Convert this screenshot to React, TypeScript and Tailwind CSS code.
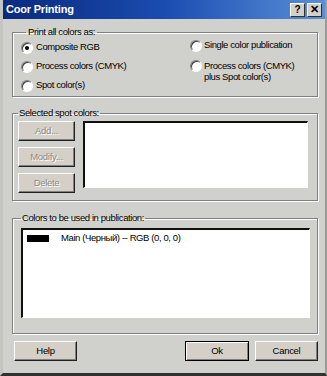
import React from "react";

const font = { fontFamily: '"Liberation Sans", Arial, sans-serif' };

function Radio({ checked }: { checked?: boolean }) {
  return (
    <span className="relative inline-block w-[12px] h-[12px] shrink-0 rounded-full bg-white border border-t-[#808080] border-l-[#808080] border-b-white border-r-white shadow-[inset_1px_1px_0_#404040]">
      {checked && (
        <span className="absolute left-[3px] top-[3px] w-[4px] h-[4px] rounded-full bg-black" />
      )}
    </span>
  );
}

function Btn({
  children,
  w,
  disabled,
  def,
}: {
  children: React.ReactNode;
  w: string;
  disabled?: boolean;
  def?: boolean;
}) {
  return (
    <div
      className={
        "h-[20px] flex items-center justify-center text-[9.5px] tracking-[-0.3px] bg-[#d4d0c8] border " +
        w +
        (def
          ? " border-black shadow-[inset_1px_1px_0_#fff,inset_-1px_-1px_0_#808080]"
          : " border-t-white border-l-white border-b-[#202020] border-r-[#202020] shadow-[inset_-1px_-1px_0_#808080]") +
        (disabled ? " text-[#8a8a8a] [text-shadow:1px_1px_0_#fff]" : " text-black")
      }
    >
      {children}
    </div>
  );
}

export default function App() {
  return (
    <div
      style={font}
      className="w-[327px] h-[376px] bg-[#d0d0cc] flex flex-col border-l-[3px] border-l-[#c4c4c0] border-r-[2px] border-r-[#9a9a96] border-b-[3px] border-b-[#303030] overflow-hidden"
    >
      {/* Title bar */}
      <div className="h-[19px] shrink-0 flex items-center justify-between pl-[3px] pr-[3px] bg-gradient-to-r from-[#0a2a7e] via-[#1a4cb0] to-[#5a8fd8]">
        <span className="text-white font-bold text-[11px] tracking-[-0.2px]">Coor Printing</span>
        <div className="flex gap-[2px]">
          <div className="w-[15px] h-[14px] bg-[#d4d0c8] border border-t-white border-l-white border-b-[#303030] border-r-[#303030] flex items-center justify-center text-[10px] font-bold leading-none text-black">
            ?
          </div>
          <div className="w-[15px] h-[14px] bg-[#d4d0c8] border border-t-white border-l-white border-b-[#303030] border-r-[#303030] flex items-center justify-center text-[11px] font-bold leading-none text-black">
            ✕
          </div>
        </div>
      </div>

      <div className="flex flex-col pl-[9px] pr-[7px] text-[9.5px] tracking-[-0.4px] text-black">
        {/* Group 1 */}
        <fieldset className="mt-[7px] border border-[#808080] shadow-[inset_1px_1px_0_#fff,1px_1px_0_#fff] px-[8px] pb-[1px]">
          <legend className="ml-[5px] px-[2px] leading-[12px]">Print all colors as:</legend>
          <div className="grid grid-cols-[169px_1fr]">
            <div className="flex flex-col">
              <div className="h-[19px] flex items-center gap-[3px]">
                <Radio checked />
                <span>Composite RGB</span>
              </div>
              <div className="h-[19px] flex items-center gap-[3px]">
                <Radio />
                <span>Process colors (CMYK)</span>
              </div>
              <div className="h-[19px] flex items-center gap-[3px]">
                <Radio />
                <span>Spot color(s)</span>
              </div>
            </div>
            <div className="flex flex-col">
              <div className="h-[15px] flex items-center gap-[2px]">
                <Radio />
                <span className="whitespace-nowrap">Single color publication</span>
              </div>
              <div className="mt-[7px] flex items-start gap-[2px]">
                <Radio />
                <span className="leading-[11px]">
                  Process colors (CMYK)
                  <br />
                  plus Spot color(s)
                </span>
              </div>
            </div>
          </div>
        </fieldset>

        {/* Group 2 */}
        <fieldset className="mt-[10px] border border-[#808080] shadow-[inset_1px_1px_0_#fff,1px_1px_0_#fff] pl-[5px] pr-[9px] pt-[2px] pb-[7px]">
          <legend className="ml-[0px] px-[1px] leading-[12px]">Selected spot colors:</legend>
          <div className="flex gap-[8px]">
            <div className="flex flex-col gap-[6px]">
              <Btn w="w-[57px]" disabled>Add...</Btn>
              <Btn w="w-[57px]" disabled>Modify...</Btn>
              <Btn w="w-[57px]" disabled>Delete</Btn>
            </div>
            <div className="flex-1 h-[67px] bg-white border-t-2 border-l-2 border-t-[#101010] border-l-[#101010] border-b border-r border-b-white border-r-white" />
          </div>
        </fieldset>

        {/* Group 3 */}
        <fieldset className="mt-[11px] border border-[#808080] shadow-[inset_1px_1px_0_#fff,1px_1px_0_#fff] pl-[8px] pr-[7px] pt-[4px] pb-[15px]">
          <legend className="ml-[0px] px-[1px] leading-[12px]">Colors to be used in publication:</legend>
          <div className="h-[90px] bg-white border-t-2 border-l-2 border-t-[#101010] border-l-[#101010] border-b border-r border-b-white border-r-white">
            <div className="flex items-center pt-[2px] pl-[4px] gap-[12px]">
              <span className="w-[22px] h-[7px] bg-black" />
              <span className="leading-[12px]">Main (Черный) -- RGB (0, 0, 0)</span>
            </div>
          </div>
        </fieldset>

        {/* Bottom buttons */}
        <div className="mt-[7px] flex items-center pl-[2px] pr-[0px]">
          <Btn w="w-[63px]">Help</Btn>
          <div className="flex-1" />
          <Btn w="w-[64px]" def>Ok</Btn>
          <div className="w-[6px]" />
          <Btn w="w-[63px]">Cancel</Btn>
        </div>
      </div>
    </div>
  );
}
